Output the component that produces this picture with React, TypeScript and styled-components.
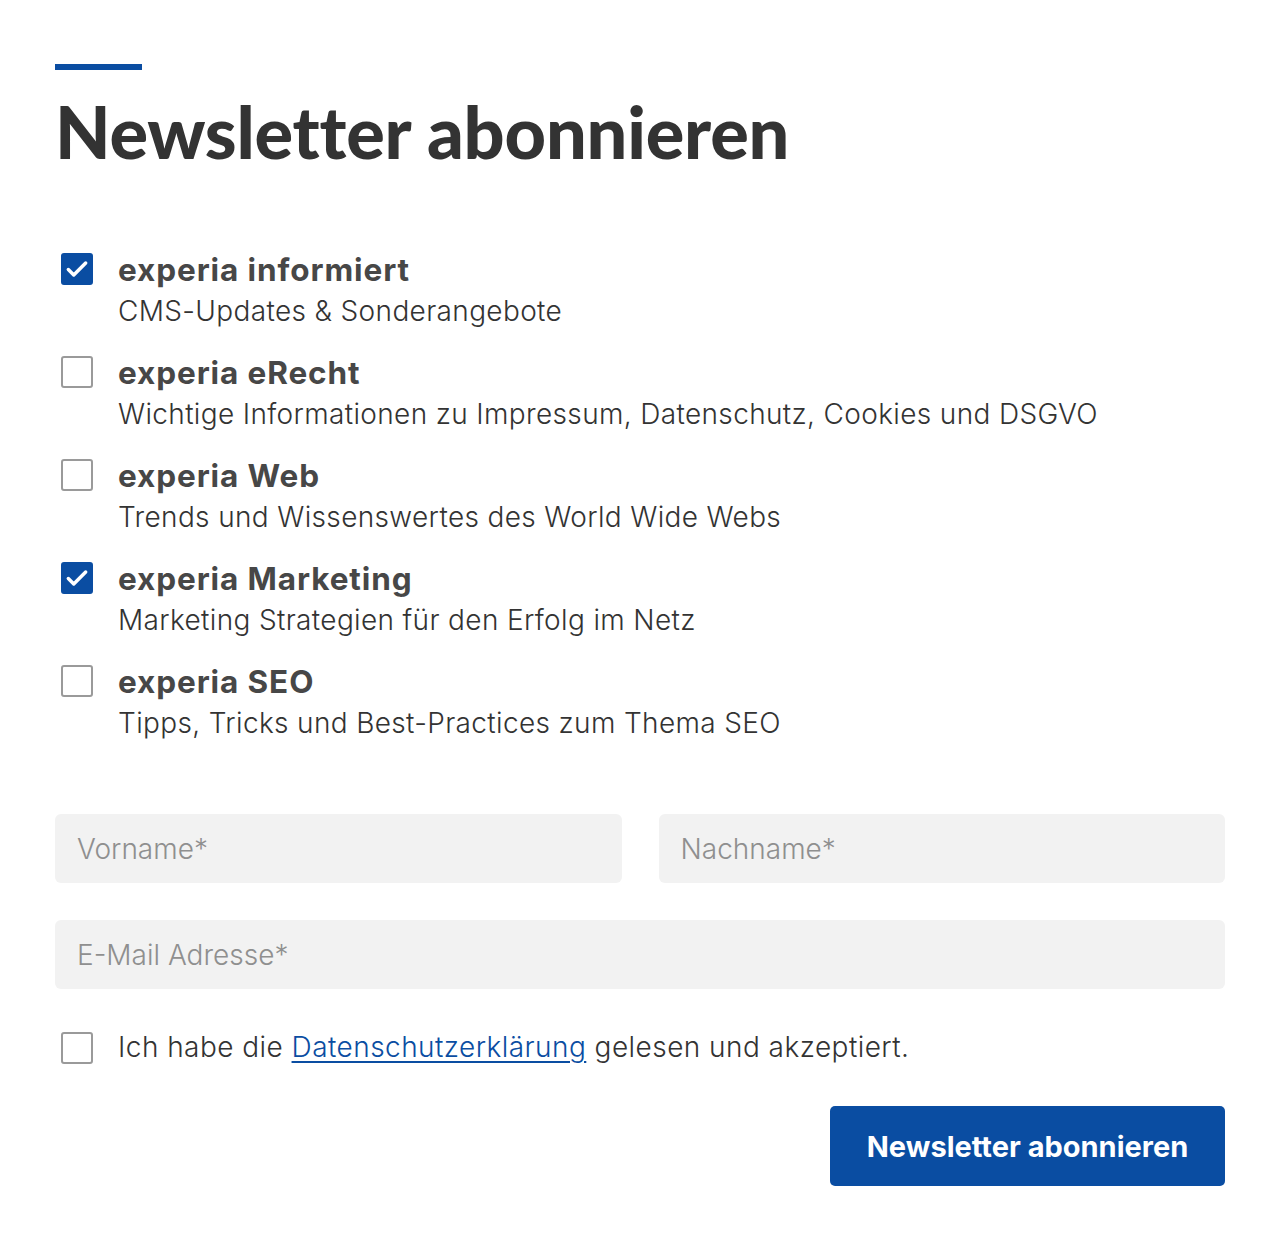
import React, { useState } from "react"
import styled, { createGlobalStyle } from "styled-components"

const GlobalStyle = createGlobalStyle`
  html, body {
    margin: 0;
    padding: 0;
    background: #ffffff;
  }
  * {
    box-sizing: border-box;
  }
`

const blue = "#0a4da2"

const topics = [
  { id: "informiert", title: "experia informiert", text: "CMS-Updates & Sonderangebote", checked: true },
  {
    id: "erecht",
    title: "experia eRecht",
    text: "Wichtige Informationen zu Impressum, Datenschutz, Cookies und DSGVO",
    checked: false,
  },
  { id: "web", title: "experia Web", text: "Trends und Wissenswertes des World Wide Webs", checked: false },
  {
    id: "marketing",
    title: "experia Marketing",
    text: "Marketing Strategien für den Erfolg im Netz",
    checked: true,
  },
  { id: "seo", title: "experia SEO", text: "Tipps, Tricks und Best-Practices zum Thema SEO", checked: false },
]

export default function App() {
  const [selected, setSelected] = useState<Record<string, boolean>>(
    Object.fromEntries(topics.map((t) => [t.id, t.checked]))
  )
  const [accepted, setAccepted] = useState(false)

  const toggle = (id: string) => setSelected((s) => ({ ...s, [id]: !s[id] }))

  return (
    <>
      <GlobalStyle />
      <Page>
        <Accent />
        <Heading>Newsletter abonnieren</Heading>

        <TopicList>
          {topics.map((t) => (
            <Topic key={t.id} onClick={() => toggle(t.id)}>
              <Check checked={selected[t.id]} />
              <TopicBody>
                <TopicTitle>{t.title}</TopicTitle>
                <TopicText>{t.text}</TopicText>
              </TopicBody>
            </Topic>
          ))}
        </TopicList>

        <Fields>
          <NameRow>
            <Input placeholder="Vorname*" />
            <Input placeholder="Nachname*" />
          </NameRow>
          <Input placeholder="E-Mail Adresse*" />
        </Fields>

        <Consent onClick={() => setAccepted(!accepted)}>
          <Check checked={accepted} />
          <ConsentText>
            Ich habe die <PrivacyLink href="#">Datenschutzerklärung</PrivacyLink> gelesen und akzeptiert.
          </ConsentText>
        </Consent>

        <Actions>
          <SubmitButton type="button">Newsletter abonnieren</SubmitButton>
        </Actions>
      </Page>
    </>
  )
}

function Check({ checked }: { checked: boolean }) {
  return (
    <Box checked={checked}>
      {checked && (
        <svg width="26" height="26" viewBox="0 0 24 24" fill="none">
          <path d="M4 12.5l5 5L20 6.5" stroke="#fff" strokeWidth="3.2" strokeLinecap="round" strokeLinejoin="round" />
        </svg>
      )}
    </Box>
  )
}

const Page = styled.div`
  width: 1170px;
  margin: 0 auto;
  padding: 64px 0 64px;
  font-family: Inter, "Noto Sans", sans-serif;
`

const Accent = styled.div`
  width: 87px;
  height: 6px;
  background: ${blue};
`

const Heading = styled.h1`
  margin: 21px 0 0;
  font-family: Lato, "Noto Sans", sans-serif;
  font-weight: 900;
  font-size: 72px;
  line-height: 80px;
  letter-spacing: -0.2px;
  color: #333333;
`

const TopicList = styled.div`
  display: flex;
  flex-direction: column;
  gap: 25px;
  margin-top: 81px;
  padding-left: 6px;
`

const Topic = styled.div`
  display: flex;
  gap: 25px;
  cursor: pointer;
`

const Box = styled.div<{ checked: boolean }>`
  flex: none;
  width: 32px;
  height: 32px;
  margin-top: 1px;
  border-radius: 3px;
  display: flex;
  align-items: center;
  justify-content: center;
  background: ${(p) => (p.checked ? blue : "#fff")};
  border: 2.5px solid ${(p) => (p.checked ? blue : "#9a9a9a")};
`

const TopicBody = styled.div`
  display: flex;
  flex-direction: column;
`

const TopicTitle = styled.div`
  font-weight: 700;
  font-size: 31.5px;
  line-height: 36px;
  letter-spacing: 0.9px;
  color: #474747;
`

const TopicText = styled.div`
  margin-top: 4px;
  font-weight: 300;
  font-size: 28px;
  line-height: 38px;
  letter-spacing: 0.35px;
  color: #333333;
`

const Fields = styled.div`
  display: flex;
  flex-direction: column;
  gap: 37px;
  margin-top: 72px;
`

const NameRow = styled.div`
  display: grid;
  grid-template-columns: 1fr 1fr;
  gap: 37px;
`

const Input = styled.input`
  width: 100%;
  height: 69px;
  border: none;
  border-radius: 6px;
  background: #f2f2f2;
  padding: 0 22px;
  font-family: Inter, "Noto Sans", sans-serif;
  font-weight: 300;
  font-size: 28px;
  color: #333;
  outline: none;

  &::placeholder {
    color: #8f8f8f;
  }
`

const Consent = styled.div`
  display: flex;
  align-items: center;
  gap: 25px;
  margin-top: 39px;
  padding-left: 6px;
  cursor: pointer;
`

const ConsentText = styled.div`
  font-weight: 300;
  font-size: 28px;
  line-height: 38px;
  letter-spacing: 0.45px;
  color: #333333;
`

const PrivacyLink = styled.a`
  color: ${blue};
  text-decoration: underline;
  text-underline-offset: 4px;
  text-decoration-thickness: 2px;
`

const Actions = styled.div`
  display: flex;
  justify-content: flex-end;
  margin-top: 40px;
`

const SubmitButton = styled.button`
  width: 395px;
  height: 80px;
  border: none;
  border-radius: 5px;
  background: ${blue};
  color: #fff;
  font-family: Inter, "Noto Sans", sans-serif;
  font-weight: 700;
  font-size: 29px;
  cursor: pointer;
`
